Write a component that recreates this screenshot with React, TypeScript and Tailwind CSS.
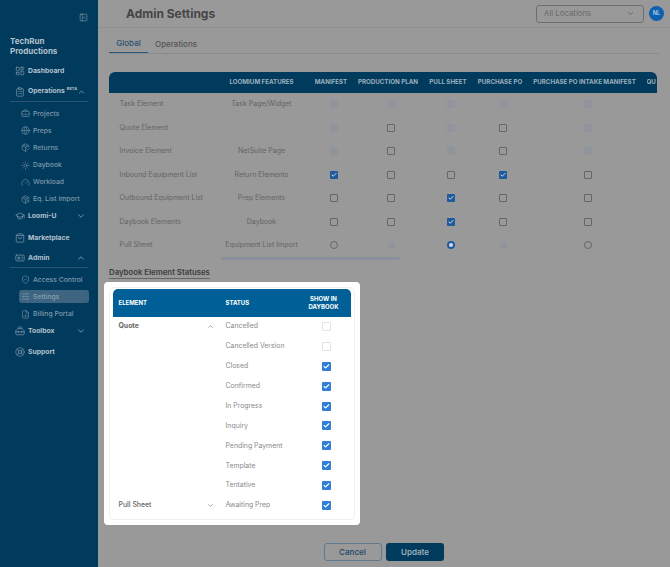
import React from "react";
import {
  BriefcaseBusiness,
  Check,
  ChevronDown,
  ChevronUp,
  ClipboardList,
  FileChartColumn,
  Gauge,
  Globe,
  GraduationCap,
  IdCard,
  LayoutDashboard,
  LifeBuoy,
  PackagePlus,
  PackageCheck,
  PanelLeftClose,
  ShieldCheck,
  ShoppingBag,
  SlidersHorizontal,
  Sun,
  Toolbox,
} from "lucide-react";

const SideHead = ({ icon: Icon, label, h, chevron, beta, line }: any) => (
  <div className={`flex items-center font-bold text-[6.8px] text-[#b4c2cc] ${h} ${line ? "mx-[10px] pl-[5px] pr-[2px] border-b border-[#2c5572]" : "pl-[15px] pr-[12px]"}`}>
    <Icon size={10} strokeWidth={1.5} className="mr-[3px] shrink-0 text-[#8ea3b3]" />
    <span>{label}</span>
    {beta && <span className="text-[4px] ml-[2px] -mt-[5px]">BETA</span>}
    {chevron === "up" && <ChevronUp size={10} className="ml-auto text-[#8ea3b3]" />}
    {chevron === "down" && <ChevronDown size={10} className="ml-auto text-[#8ea3b3]" />}
  </div>
);

const SideSub = ({ icon: Icon, label, active }: any) => (
  <div className={`flex items-center text-[6.8px] font-medium ${active ? "ml-[19px] mr-[9px] pl-[2px] h-[13px] my-[2.1px] bg-[#3d6480] rounded-[3px] text-[#8ba0af]" : "h-[17.2px] pl-[21px] text-[#7f99ab]"}`}>
    <Icon size={9} strokeWidth={1.5} className="mr-[3px] shrink-0" />
    <span className="whitespace-nowrap">{label}</span>
  </div>
);

const Box = ({ kind }: { kind: string }) => {
  if (kind === "off") return <div className="w-[8px] h-[8px] rounded-[1px] bg-[#8f959b]" />;
  if (kind === "empty") return <div className="w-[8px] h-[8px] rounded-[1px] border border-[#666]" />;
  if (kind === "on")
    return (
      <div className="w-[8px] h-[8px] rounded-[1px] bg-[#1e5a9c] flex items-center justify-center">
        <Check size={6} strokeWidth={4} className="text-[#d6dde6]" />
      </div>
    );
  if (kind === "radio") return <div className="w-[8px] h-[8px] rounded-full border border-[#666]" />;
  if (kind === "radiooff") return <div className="w-[7px] h-[7px] rounded-full bg-[#8f959b]" />;
  return <div className="w-[8px] h-[8px] rounded-full border-[2.5px] border-[#1e5a9c] bg-[#d6dde6]" />;
};

const rows = [
  ["Task Element", "Task Page/Widget", "off", "off", "off", "off", "off"],
  ["Quote Element", "", "off", "empty", "off", "empty", "off"],
  ["Invoice Element", "NetSuite Page", "off", "empty", "off", "empty", "off"],
  ["Inbound Equipment List", "Return Elements", "on", "empty", "empty", "on", "empty"],
  ["Outbound Equipment List", "Prep Elements", "empty", "empty", "on", "empty", "empty"],
  ["Daybook Elements", "Daybook", "empty", "empty", "on", "empty", "empty"],
  ["Pull Sheet", "Equipment List Import", "radio", "radiooff", "radioon", "radiooff", "radio"],
];

const headers = ["MANIFEST", "PRODUCTION PLAN", "PULL SHEET", "PURCHASE PO", "PURCHASE PO INTAKE MANIFEST"];

const statuses = [
  ["Cancelled", false],
  ["Cancelled Version", false],
  ["Closed", true],
  ["Confirmed", true],
  ["In Progress", true],
  ["Inquiry", true],
  ["Pending Payment", true],
  ["Template", true],
  ["Tentative", true],
  ["Awaiting Prep", true],
] as const;

export default function App() {
  return (
    <div className="flex w-[670px] h-[567px] overflow-hidden bg-[#999999] font-['Inter',sans-serif]">
      {/* Sidebar */}
      <aside className="w-[98px] shrink-0 bg-[#003a5c] flex flex-col">
        <div className="flex justify-end pr-[10px] pt-[12.5px] h-[34px]">
          <PanelLeftClose size={9} strokeWidth={1.5} className="text-[#8ea3b3]" />
        </div>
        <div className="pl-[10px] text-[8px] leading-[10px] font-bold text-[#b4c2cc] h-[26px] pt-[2px]">
          TechRun
          <br />
          Productions
        </div>
        <SideHead icon={LayoutDashboard} label="Dashboard" h="h-[22px]" />
        <SideHead icon={ClipboardList} label="Operations" h="h-[20px]" chevron="up" beta line />
        <div className="pt-[3px]">
          <SideSub icon={BriefcaseBusiness} label="Projects" />
          <SideSub icon={Globe} label="Preps" />
          <SideSub icon={PackageCheck} label="Returns" />
          <SideSub icon={Sun} label="Daybook" />
          <SideSub icon={Gauge} label="Workload" />
          <SideSub icon={PackagePlus} label="Eq. List Import" />
        </div>
        <SideHead icon={GraduationCap} label="Loomi-U" h="h-[16px]" chevron="down" />
        <SideHead icon={ShoppingBag} label="Marketplace" h="h-[27px]" />
        <SideHead icon={IdCard} label="Admin" h="h-[19px] mt-[-2px]" chevron="up" line />
        <div className="pt-[3px]">
          <SideSub icon={ShieldCheck} label="Access Control" />
          <SideSub icon={SlidersHorizontal} label="Settings" active />
          <SideSub icon={FileChartColumn} label="Billing Portal" />
        </div>
        <SideHead icon={Toolbox} label="Toolbox" h="h-[16px]" chevron="down" />
        <SideHead icon={LifeBuoy} label="Support" h="h-[27px]" />
      </aside>

      {/* Main */}
      <main className="flex-1 min-w-0 flex flex-col">
        <header className="h-[28px] shrink-0 border-b border-[#909090] flex items-center pl-[28px] pr-[6px]">
          <h1 className="text-[12px] font-bold text-[#454545]">Admin Settings</h1>
          <div className="ml-auto w-[108px] h-[18px] rounded-[3px] border border-[#6e6e6e] flex items-center pl-[7px] pr-[8px] text-[7.8px] text-[#6a6a6a]">
            All Locations
            <ChevronDown size={9} className="ml-auto text-[#555]" />
          </div>
          <div className="ml-[5px] w-[15px] h-[15px] rounded-full bg-[#0f5fb0] flex items-center justify-center text-[5.5px] font-semibold text-[#bcd0e6]">
            NL
          </div>
        </header>

        <div className="pl-[11px] pr-[11px]">
          <div className="flex items-end h-[25.5px] border-b border-[#8a8a8a] text-[8px] font-medium">
            <div className="w-[39px] h-[25.5px] flex items-end justify-center pb-[2.5px] text-[#2d4f6d] border-b-[1.5px] border-[#2d5a80]">Global</div>
            <div className="pl-[7px] pb-[3px] text-[#555]">Operations</div>
          </div>

          {/* Global table */}
          <div className="mt-[18px] w-[548px] overflow-hidden">
            <div className="h-[21px] bg-[#003a5c] rounded-t-[6px] grid grid-cols-[75px_31px_61px_37px_45px_102px_auto] gap-x-[11px] items-center pl-[120.5px] text-[6.2px] font-bold text-[#9fb0bd] whitespace-nowrap">
              <div>LOOMIUM FEATURES</div>
              {headers.map((h) => (
                <div key={h} className="flex justify-center">{h}</div>
              ))}
              <div className="overflow-hidden">QU</div>
            </div>
            {rows.map((r) => (
              <div key={r[0]} className="h-[23.5px] grid grid-cols-[91px_123px_22px_92px_28px_76px_94px] items-center text-[7px] text-[#646464]">
                <div className="pl-[10.5px] whitespace-nowrap">{r[0]}</div>
                <div className="text-center whitespace-nowrap">{r[1]}</div>
                {r.slice(2).map((k, i) => (
                  <div key={i} className="flex justify-center">
                    <Box kind={k} />
                  </div>
                ))}
              </div>
            ))}
          </div>
          <div className="ml-[112px] w-[179px] h-[3px] rounded-full bg-[#8b8f9c]" />

          <h2 className="mt-[6px] w-fit text-[7.8px] font-semibold leading-[12px] text-[#3c3c3c] border-b border-[#666]">Daybook Element Statuses</h2>

          {/* Highlighted card */}
          <div className="mt-[2.5px] -ml-[5.5px] w-[256px] h-[243px] bg-white rounded-[4px] p-[5px]">
            <div className="h-full border border-[#eef0f6] rounded-[5px] px-[3px] pt-[1.5px]">
              <div className="h-[27.5px] bg-[#005f96] rounded-t-[5px] grid grid-cols-[107px_70px_1fr] items-center pl-[6px] text-[6px] font-bold text-white">
                <div>ELEMENT</div>
                <div>STATUS</div>
                <div className="text-center leading-[8px] pl-[1px]">
                  SHOW IN
                  <br />
                  DAYBOOK
                </div>
              </div>
              {statuses.map(([s, on], i) => (
                <div key={s} className="h-[19.9px] grid grid-cols-[107px_96px_1fr] items-center pl-[6px] text-[6.9px] text-[#8a8a8a]">
                  <div className="flex items-center pr-[12px] text-[#666]">
                    {i === 0 && <span className="font-bold">Quote</span>}
                    {i === 0 && <ChevronUp size={7} className="ml-auto" />}
                    {i === 9 && <span className="font-medium">Pull Sheet</span>}
                    {i === 9 && <ChevronDown size={7} className="ml-auto" />}
                  </div>
                  <div className="whitespace-nowrap">{s}</div>
                  <div>
                    {on ? (
                      <div className="w-[9px] h-[9px] rounded-[1px] bg-[#2f7ed8] flex items-center justify-center">
                        <Check size={7} strokeWidth={4} className="text-white" />
                      </div>
                    ) : (
                      <div className="w-[9px] h-[9px] rounded-[1px] border border-[#dfe3ea]" />
                    )}
                  </div>
                </div>
              ))}
            </div>
          </div>

          <div className="mt-[18px] ml-[214.5px] flex gap-[4.5px] text-[8px] font-semibold">
            <button className="w-[58px] h-[18px] rounded-[3px] border border-[#5d7a91] text-[#2d4f6d]">Cancel</button>
            <button className="w-[58px] h-[18px] rounded-[3px] bg-[#003a5c] text-[#9fb0bd]">Update</button>
          </div>
        </div>
      </main>
    </div>
  );
}
